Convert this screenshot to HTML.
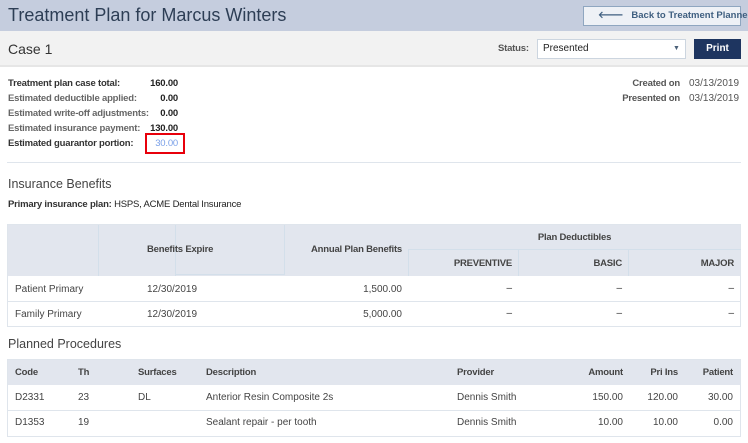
<!DOCTYPE html><html><head><style>
*{margin:0;padding:0;box-sizing:border-box}
body{width:748px;height:443px;background:#fff;font-family:"Liberation Sans",sans-serif;position:relative;overflow:hidden;color:#333}
div,span{position:absolute;white-space:nowrap}
.b{font-weight:bold}
.s{font-size:10px;transform-origin:left center}
.lbl{font-size:9.5px;font-weight:bold;color:#444;letter-spacing:-.2px}
.r{text-align:right}
.v{position:absolute;border-left:1px solid #d3dfea}
.h{position:absolute;border-top:1px solid #dfe5ec}
</style></head><body>
<div style="left:0;top:0;width:748px;height:31px;background:#c5cdde"></div>
<div style="left:8px;top:5px;font-size:18px;color:#2d3e55">Treatment Plan for Marcus Winters</div>
<div style="left:583px;top:6px;width:158px;height:20px;background:#eef1f6;border:1px solid #8fa6c0;font-size:9.5px;font-weight:bold;color:#3f5f80;line-height:18px;padding-left:14px">🡐&nbsp;&nbsp;&nbsp;Back to Treatment Planner</div>
<div style="left:0;top:31px;width:748px;height:36px;background:#f2f2f2;border-bottom:2px solid #e6e6e6"></div>
<div style="left:8px;top:41px;font-size:14px;color:#333">Case 1</div>
<div class="lbl" style="left:498px;top:43px;color:#555">Status:</div>
<div style="left:537px;top:39px;width:149px;height:20px;background:#fff;border:1px solid #ccd5df;font-size:10px;line-height:18px;padding-left:5px;color:#222">Presented<span style="left:135px;top:0;font-size:7px;color:#4a6078">▼</span></div>
<div style="left:694px;top:39px;width:47px;height:20px;background:#1e3560;color:#fff;font-size:10px;font-weight:bold;text-align:center;line-height:20px">Print</div>

<div class="lbl" style="left:8px;top:78px;color:#333">Treatment plan case total:</div>
<div class="lbl" style="left:8px;top:93px;color:#666">Estimated deductible applied:</div>
<div class="lbl" style="left:8px;top:108px;color:#666">Estimated write-off adjustments:</div>
<div class="lbl" style="left:8px;top:123px;color:#666">Estimated insurance payment:</div>
<div class="lbl" style="left:8px;top:138px;color:#333">Estimated guarantor portion:</div>
<div class="lbl r" style="left:128px;width:50px;top:78px;color:#222">160.00</div>
<div class="lbl r" style="left:128px;width:50px;top:93px;color:#222">0.00</div>
<div class="lbl r" style="left:128px;width:50px;top:108px;color:#222">0.00</div>
<div class="lbl r" style="left:128px;width:50px;top:123px;color:#222">130.00</div>
<div class="lbl r" style="left:128px;width:50px;top:138px;color:#7aa0e8;font-weight:normal">30.00</div>
<div style="left:145px;top:133px;width:40px;height:21px;border:2px solid #e8000b"></div>
<div class="lbl r" style="left:580px;width:100px;top:78px;color:#555">Created on</div>
<div class="lbl r" style="left:580px;width:100px;top:93px;color:#555">Presented on</div>
<div style="left:689px;top:78px;font-size:10px;color:#555">03/13/2019</div>
<div style="left:689px;top:93px;font-size:10px;color:#555">03/13/2019</div>
<div class="h" style="left:7px;top:162px;width:734px"></div>

<div style="left:8px;top:177px;font-size:12.5px;color:#444">Insurance Benefits</div>
<div class="lbl" style="left:8px;top:199px;color:#333">Primary insurance plan: <span style="position:static;font-weight:normal;color:#222">HSPS, ACME Dental Insurance</span></div>

<div style="left:7px;top:224px;width:734px;height:103px;border:1px solid #dfe5ec"></div>
<div style="left:8px;top:225px;width:732px;height:51px;background:#e2e6ee"></div>
<div class="v" style="left:98px;top:225px;height:51px"></div>
<div class="v" style="left:175px;top:225px;height:51px"></div>
<div style="left:175px;top:225px;width:110px;height:50px;border:1px solid #d3dfea;border-top:none"></div>
<div class="v" style="left:408px;top:250px;height:26px"></div>
<div class="v" style="left:518px;top:250px;height:26px"></div>
<div class="v" style="left:628px;top:250px;height:26px"></div>
<div class="h" style="left:408px;top:249px;width:333px;border-color:#d3dfea"></div>
<div class="lbl" style="left:147px;top:244px;color:#444">Benefits Expire</div>
<div class="lbl r" style="left:250px;width:152px;top:244px;color:#444">Annual Plan Benefits</div>
<div class="lbl" style="left:408px;width:333px;text-align:center;top:232px;color:#444">Plan Deductibles</div>
<div class="lbl r" style="left:410px;width:102px;top:258px;color:#444">PREVENTIVE</div>
<div class="lbl r" style="left:520px;width:102px;top:258px;color:#444">BASIC</div>
<div class="lbl r" style="left:630px;width:104px;top:258px;color:#444">MAJOR</div>
<div class="h" style="left:7px;top:301px;width:734px"></div>
<div style="left:15px;top:284px;font-size:10px;color:#444">Patient Primary</div>
<div style="left:147px;top:284px;font-size:10px;color:#444">12/30/2019</div>
<div class="r" style="left:300px;width:102px;top:284px;font-size:10px;color:#444">1,500.00</div>
<div style="left:15px;top:309px;font-size:10px;color:#444">Family Primary</div>
<div style="left:147px;top:309px;font-size:10px;color:#444">12/30/2019</div>
<div class="r" style="left:300px;width:102px;top:309px;font-size:10px;color:#444">5,000.00</div>
<div class="r" style="left:410px;width:102px;top:283px;font-size:10px">–</div>
<div class="r" style="left:520px;width:102px;top:283px;font-size:10px">–</div>
<div class="r" style="left:630px;width:104px;top:283px;font-size:10px">–</div>
<div class="r" style="left:410px;width:102px;top:308px;font-size:10px">–</div>
<div class="r" style="left:520px;width:102px;top:308px;font-size:10px">–</div>
<div class="r" style="left:630px;width:104px;top:308px;font-size:10px">–</div>

<div style="left:8px;top:337px;font-size:12.5px;color:#444">Planned Procedures</div>
<div style="left:7px;top:359px;width:734px;height:78px;border:1px solid #dfe5ec"></div>
<div style="left:8px;top:360px;width:732px;height:25px;background:#e2e6ee"></div>
<div class="h" style="left:7px;top:410px;width:734px"></div>
<div class="lbl" style="left:15px;top:367px;color:#444">Code</div>
<div class="lbl" style="left:78px;top:367px;color:#444">Th</div>
<div class="lbl" style="left:138px;top:367px;color:#444">Surfaces</div>
<div class="lbl" style="left:206px;top:367px;color:#444">Description</div>
<div class="lbl" style="left:457px;top:367px;color:#444">Provider</div>
<div class="lbl r" style="left:573px;width:50px;top:367px;color:#444">Amount</div>
<div class="lbl r" style="left:628px;width:50px;top:367px;color:#444">Pri Ins</div>
<div class="lbl r" style="left:683px;width:50px;top:367px;color:#444">Patient</div>
<div style="left:15px;top:392px;font-size:10px;color:#444">D2331</div>
<div style="left:78px;top:392px;font-size:10px;color:#444">23</div>
<div style="left:138px;top:392px;font-size:10px;color:#444">DL</div>
<div style="left:206px;top:392px;font-size:10px;color:#444">Anterior Resin Composite 2s</div>
<div style="left:457px;top:392px;font-size:10px;color:#444">Dennis Smith</div>
<div class="r" style="left:573px;width:50px;top:392px;font-size:10px;color:#444">150.00</div>
<div class="r" style="left:628px;width:50px;top:392px;font-size:10px;color:#444">120.00</div>
<div class="r" style="left:683px;width:50px;top:392px;font-size:10px;color:#444">30.00</div>
<div style="left:15px;top:417px;font-size:10px;color:#444">D1353</div>
<div style="left:78px;top:417px;font-size:10px;color:#444">19</div>
<div style="left:206px;top:417px;font-size:10px;color:#444">Sealant repair - per tooth</div>
<div style="left:457px;top:417px;font-size:10px;color:#444">Dennis Smith</div>
<div class="r" style="left:573px;width:50px;top:417px;font-size:10px;color:#444">10.00</div>
<div class="r" style="left:628px;width:50px;top:417px;font-size:10px;color:#444">10.00</div>
<div class="r" style="left:683px;width:50px;top:417px;font-size:10px;color:#444">0.00</div>
</body></html>
